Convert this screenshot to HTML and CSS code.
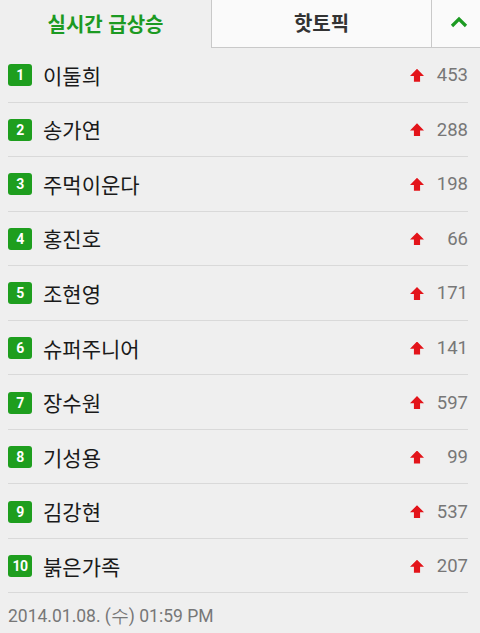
FILE: index.html
```html
<!DOCTYPE html>
<html lang="ko">
<head>
<meta charset="utf-8">
<link rel="stylesheet" href="styles.css">
</head>
<body>
<div class="tabs">
  <div class="tab tab-active">실시간 급상승</div>
  <div class="tab tab-other">핫토픽</div>
  <div class="tab tab-toggle">
    <svg width="18" height="12" viewBox="0 0 18 12"><path d="M2 10 L9 3 L16 10" fill="none" stroke="#1c9a22" stroke-width="3.2"/></svg>
  </div>
</div>
<ul class="list">
  <li class="row"><span class="badge">1</span><span class="name">이둘희</span><span class="arrow"></span><span class="num">453</span></li>
  <li class="row"><span class="badge">2</span><span class="name">송가연</span><span class="arrow"></span><span class="num">288</span></li>
  <li class="row"><span class="badge">3</span><span class="name">주먹이운다</span><span class="arrow"></span><span class="num">198</span></li>
  <li class="row"><span class="badge">4</span><span class="name">홍진호</span><span class="arrow"></span><span class="num">66</span></li>
  <li class="row"><span class="badge">5</span><span class="name">조현영</span><span class="arrow"></span><span class="num">171</span></li>
  <li class="row"><span class="badge">6</span><span class="name">슈퍼주니어</span><span class="arrow"></span><span class="num">141</span></li>
  <li class="row"><span class="badge">7</span><span class="name">장수원</span><span class="arrow"></span><span class="num">597</span></li>
  <li class="row"><span class="badge">8</span><span class="name">기성용</span><span class="arrow"></span><span class="num">99</span></li>
  <li class="row"><span class="badge">9</span><span class="name">김강현</span><span class="arrow"></span><span class="num">537</span></li>
  <li class="row"><span class="badge">10</span><span class="name">붉은가족</span><span class="arrow"></span><span class="num">207</span></li>
</ul>
<div class="footer">2014.01.08. (수) 01:59 PM</div>
</body>
</html>
```
FILE: styles.css
```css
* { box-sizing: border-box; }
html, body { margin: 0; padding: 0; }
body {
  width: 480px;
  height: 633px;
  overflow: hidden;
  background: #efefef;
  font-family: "Noto Sans CJK KR", Roboto, sans-serif;
}
.tabs {
  display: flex;
  height: 48px;
}
.tab {
  display: flex;
  align-items: center;
  justify-content: center;
  font-size: 20px;
  font-weight: bold;
}
.tab-active {
  width: 211px;
  color: #1c9a22;
  background: #efefef;
  padding-bottom: 2px;
}
.tab-other {
  width: 220px;
  background: #fafafa;
  color: #333;
  border-left: 1px solid #c9c9c9;
  border-bottom: 1px solid #c9c9c9;
  padding-bottom: 2px;
}
.tab-toggle {
  flex: 1;
  background: #fafafa;
  border-left: 1px solid #c9c9c9;
  border-bottom: 1px solid #c9c9c9;
  padding-left: 6px;
  padding-bottom: 4px;
}
.list {
  list-style: none;
  margin: 0;
  padding: 0 12px 0 8px;
}
.row {
  display: flex;
  align-items: center;
  height: 54.56px;
  border-bottom: 1px solid #d9d9d9;
  padding-top: 1px;
}
.badge {
  width: 24px;
  height: 22px;
  border-radius: 3px;
  background: #1e9e1e;
  color: #fff;
  font-family: Roboto, sans-serif;
  font-weight: bold;
  font-size: 14px;
  display: flex;
  align-items: center;
  justify-content: center;
  letter-spacing: -0.5px;
}
.name {
  flex: 1;
  margin-left: 11px;
  font-size: 21px;
  color: #1a1a1a;
  line-height: 1;
}
.arrow {
  width: 14px;
  height: 13px;
  background: #e3141a;
  clip-path: polygon(50% 0, 100% 55%, 72% 55%, 72% 100%, 28% 100%, 28% 55%, 0 55%);
}
.num {
  width: 44px;
  text-align: right;
  font-family: Roboto, sans-serif;
  font-size: 18.5px;
  color: #777;
}
.footer {
  padding: 11px 0 0 8px;
  font-family: Roboto, sans-serif;
  font-size: 17.5px;
  color: #777;
}
```
